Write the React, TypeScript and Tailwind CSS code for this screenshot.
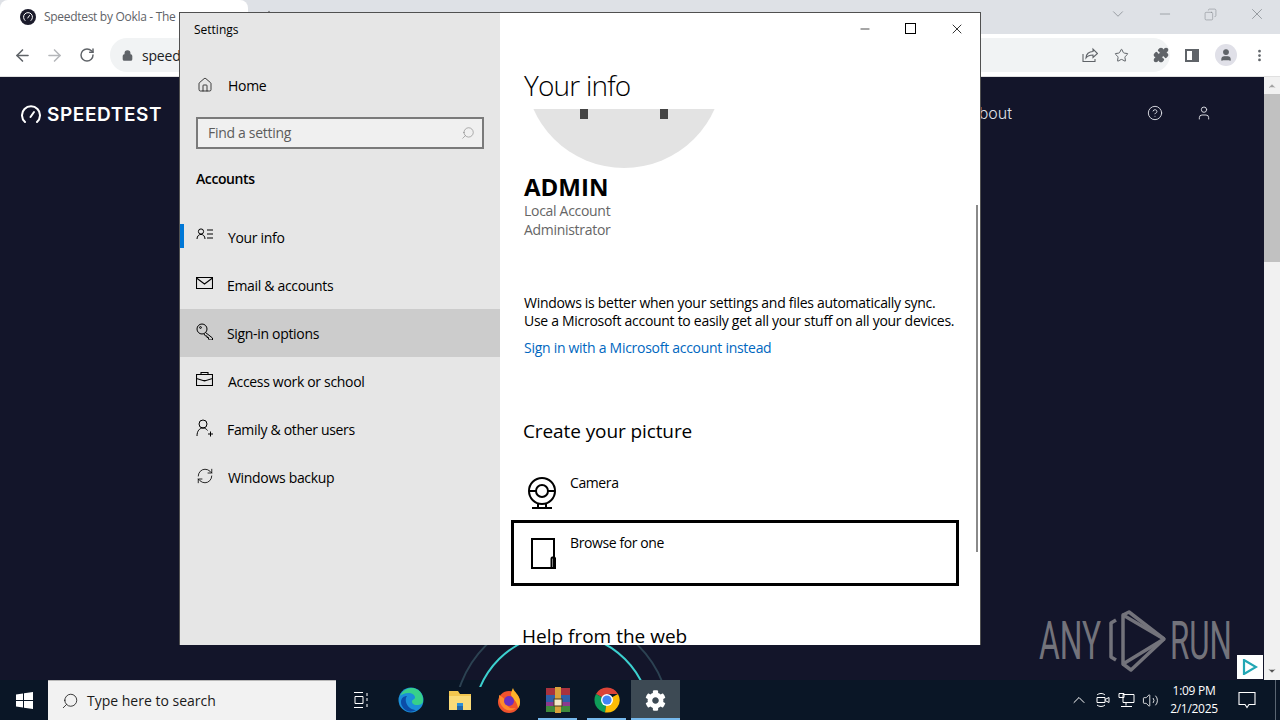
import { ArrowLeft, ArrowRight, RotateCw, Lock, Star, Puzzle, MoreVertical, ChevronDown, Minus, X, Copy, CircleHelp, User, Home, Search, RefreshCw, ChevronUp, Volume2, Plus } from "lucide-react";
import { FaCog } from "react-icons/fa";

const segoe = "font-['Open_Sans','Noto_Sans',sans-serif]";

function UserInfoIcon() {
  return (
    <svg width="17" height="17" viewBox="0 0 17 17" fill="none" stroke="currentColor" strokeWidth="1">
      <circle cx="5" cy="4.500" r="2.600" />
      <path d="M1 12c0-3 2-4.600 4-4.600S9 9 9 12M11 3h6M11 7h6M11 11h6" />
    </svg>
  );
}

function MailIcon() {
  return (
    <svg width="17" height="17" viewBox="0 0 17 17" fill="none" stroke="currentColor" strokeWidth="1.100">
      <path d="M.5 2.500h16v11H.5zM.5 3l8 6 8-6" />
    </svg>
  );
}

function KeyIcon() {
  return (
    <svg width="17" height="17" viewBox="0 0 17 17" fill="none" stroke="currentColor" strokeWidth="1">
      <circle cx="6" cy="6" r="5" />
      <circle cx="4.500" cy="4.500" r=".9" />
      <path d="M9.500 9.500 16.500 15v2h-3l-1-1v-1.500H11V13H9.500l-1.500-2" />
    </svg>
  );
}

function BriefcaseIcon() {
  return (
    <svg width="17" height="17" viewBox="0 0 17 17" fill="none" stroke="currentColor" strokeWidth="1.100">
      <path d="M.5 3.500h16v11H.5zM5 3.500v-2h7v2M.5 7.500l8 2.500 8-2.500M7 9.500h3" />
    </svg>
  );
}

function FamilyIcon() {
  return (
    <svg width="17" height="18" viewBox="0 0 17 18" fill="none" stroke="currentColor" strokeWidth="1">
      <circle cx="7" cy="5" r="4" />
      <path d="M1 17c0-5 2.500-8 6-8 2 0 3.500 1 4.500 2.500M12 15h5M14.500 12.500v5" />
    </svg>
  );
}

const NavItems = [
  { label: "Your info", icon: <UserInfoIcon />, selected: false, active: true, labelClass: "ml-[1px]" },
  { label: "Email & accounts", icon: <MailIcon />, selected: false, active: false, labelClass: "" },
  { label: "Sign-in options", icon: <KeyIcon />, selected: true, active: false, labelClass: "" },
  { label: "Access work or school", icon: <BriefcaseIcon />, selected: false, active: false, labelClass: "ml-[1px]" },
  { label: "Family & other users", icon: <FamilyIcon />, selected: false, active: false, labelClass: "" },
  { label: "Windows backup", icon: <RefreshCw size={18} strokeWidth={1.1} />, selected: false, active: false, labelClass: "" },
];

function Speedometer({ className }: { className?: string }) {
  return (
    <svg className={className} viewBox="0 0 20 20" fill="none" stroke="currentColor" strokeWidth="2" strokeLinecap="round">
      <path d="M4 17a9 9 0 1 1 12 0" />
      <path d="M9.500 12l3.500-5" />
    </svg>
  );
}

function WindowsLogo() {
  return (
    <svg width="17" height="17" viewBox="0 0 17 17" fill="white">
      <path d="M0 2.400 7 1.400V8H0zM8 1.200 17 0v8H8zM0 9h7v6.600l-7-1zM8 9h9v8l-9-1.200z" />
    </svg>
  );
}

function EdgeIcon() {
  return (
    <svg width="26" height="26" viewBox="0 0 26 26">
      <circle cx="13" cy="13" r="12.500" fill="#1b8fd8" />
      <path d="M2 9C5 2 12 0 17 1.500 23 3.500 25.500 9 25 14c0 3-3 4-6 4-4 0-5-2-5-3.500 0-2 3-2 3-4C17 8 14 6 10.500 6 6 6 3 8 2 9z" fill="#37d08a" />
      <path d="M3 15c0-4 3-6 6-6-2 2-2 8 3 12 2 1.500 5 2 6 2-2 1.500-5 2-7 1.600C6 23 3 19 3 15z" fill="#0b4da8" />
    </svg>
  );
}

function FolderIcon() {
  return (
    <svg width="24" height="24" viewBox="0 0 24 24">
      <path d="M1 3h9l2 3h11v15H1z" fill="#f3c64f" />
      <path d="M1 8h22v14H1z" fill="#fbdb78" />
      <path d="M9 15h6v3H9z" fill="#2e8fd8" />
      <path d="M9 18h6v4H9z" fill="#2467a8" />
    </svg>
  );
}

function FirefoxIcon() {
  return (
    <svg width="24" height="26" viewBox="0 0 24 26">
      <circle cx="12" cy="15" r="11" fill="#f0522d" />
      <path d="M16 1c1 4 7 7 7 14 0 3-1 5-2 6-1-7-5-9-7-13 0-3 1-5 2-7z" fill="#ffb229" />
      <path d="M2 8c0 5 1 12 8 15 3 1 7 0 9-2-5 1-9-1-9-4 0-2 2-3 4-3-1-2-4-2-6-1-1-2-3-3-6-5z" fill="#ff8a2b" />
      <circle cx="12" cy="14" r="5" fill="#6b2fc0" />
    </svg>
  );
}

function WinrarIcon() {
  return (
    <svg width="24" height="26" viewBox="0 0 24 26">
      <rect x="0" y="1" width="24" height="7" fill="#a8323e" />
      <rect x="0" y="8" width="24" height="7" fill="#2f5fa8" />
      <rect x="0" y="15" width="24" height="4" fill="#8a3a8e" />
      <rect x="0" y="19" width="24" height="6" fill="#3f8a3c" />
      <rect x="9" y="0" width="6" height="26" fill="#d8a23c" />
      <rect x="8" y="12" width="8" height="7" fill="#f4e9c8" stroke="#4a3a1c" />
    </svg>
  );
}

function ChromeIcon() {
  return (
    <svg width="26" height="26" viewBox="0 0 26 26">
      <path d="M13 13 2 7a12.500 12.500 0 0 1 22 0H13z" fill="#db4437" />
      <path d="M13 13 2 7a12.500 12.500 0 0 0 9 18.400z" fill="#0f9d58" />
      <path d="M13 13 24 7a12.500 12.500 0 0 1-13 18.400z" fill="#fbbc05" />
      <circle cx="13" cy="13" r="6" fill="white" />
      <circle cx="13" cy="13" r="4.600" fill="#4285f4" />
    </svg>
  );
}

function RunLogo() {
  return (
    <svg width="58" height="62" viewBox="0 0 58 62" fill="none" stroke="#73737b" strokeWidth="3.500" strokeLinejoin="round">
      <path d="M14 5 55 29 14 54z" />
      <path d="M14 5 20 2 55 29M14 54l8 6 33-31" />
      <path d="M7 10 2 13v34l5 3" />
    </svg>
  );
}

function TaskbarApp({ children, running, active }: { children: React.ReactNode; running?: boolean; active?: boolean }) {
  return (
    <div className={`relative w-[49px] h-10 flex items-center justify-center ${active ? "bg-[#3d4a54]" : ""}`}>
      {children}
      {running && <div className={`absolute bottom-0 h-[2px] bg-[#76b9ed] ${active ? "left-0 right-0" : "left-[5px] right-[5px]"}`} />}
    </div>
  );
}

export default function App() {
  return (
    <div className={`relative w-[1280px] h-[720px] overflow-hidden flex flex-col bg-[#13152a] ${segoe}`}>
      {/* chrome tab strip */}
      <div className="h-[34px] bg-[#dee1e6] flex items-end justify-between shrink-0">
        <div className="flex items-center">
          <div className="w-[248px] h-[34px] bg-white rounded-t-lg flex items-center pl-[20px] gap-[8px]">
            <div className="w-4 h-4 rounded-full bg-[#1c1c2c] flex items-center justify-center text-white">
              <Speedometer className="w-[10px] h-[10px]" />
            </div>
            <span className="text-[12px] text-[#5f6368] tracking-[-0.3px] whitespace-nowrap">Speedtest by Ookla - The</span>
          </div>
          <Plus size={16} strokeWidth={1.5} className="ml-[13px] text-[#444] -mt-[2px]" />
        </div>
        <div className="flex items-center h-[30px] mb-[5px] text-[#80868b]">
          <ChevronDown size={18} strokeWidth={1} className="mr-[30px]" />
          <Minus size={16} strokeWidth={1} className="mr-[31px]" />
          <Copy size={13} strokeWidth={1} className="mr-[31px] -scale-x-100" />
          <X size={18} strokeWidth={1} className="mr-[14px]" />
        </div>
      </div>

      {/* chrome toolbar */}
      <div className="h-[43px] bg-white flex items-center shrink-0 border-b border-[#e0e0e0] text-[#5f6368]">
        <ArrowLeft size={19} strokeWidth={2} className="ml-[13px]" />
        <ArrowRight size={19} strokeWidth={2} className="ml-[13px] text-[#b5b7ba]" />
        <RotateCw size={16} strokeWidth={2.2} className="ml-[15px]" />
        <div className="ml-[15px] w-[1060px] h-[34px] shrink-0 rounded-full bg-[#f1f3f4] flex items-center pl-[12px]">
          <Lock size={11} strokeWidth={3} fill="#5f6368" />
          <span className="ml-[9px] text-[14px] tracking-[-0.2px] text-[#202124] flex-1">speed</span>
        </div>
      </div>
      <div className="absolute top-[34px] right-0 h-[42px] w-[280px] flex items-center justify-end pr-[13px] text-[#5f6368] pointer-events-none">
        <svg className="mr-[16px]" width="16" height="16" viewBox="0 0 16 16" fill="none" stroke="currentColor" strokeWidth="1.100">
          <path d="M1 7v7.500h12V12M4 11c0-4 3-6.500 7-6.500V2l4.500 4.500L11 10.500V8c-3 0-5.500 1-7 3z" />
        </svg>
        <Star size={15} strokeWidth={1.6} className="mr-[24px]" />
        <Puzzle size={16} fill="#5f6368" className="mr-[16px]" />
        <div className="w-[14px] h-[13px] border-2 border-[#5f6368] mr-[16px] flex justify-end"><div className="w-[5px] bg-[#5f6368]" /></div>
        <div className="w-[22px] h-[22px] rounded-full bg-[#e0e0e8] flex items-center justify-center mr-[15px]"><User size={14} fill="#5f6368" /></div>
        <MoreVertical size={15} strokeWidth={2.4} />
      </div>

      {/* speedtest page */}
      <div className="flex-1 flex min-h-0 relative">
        <div className="flex-1 relative bg-[#13152a]">
          <div className="h-[76px] flex items-center justify-between text-white">
            <div className="flex items-center pl-[21px] gap-[6px]">
              <Speedometer className="w-[20px] h-[20px]" />
              <span className="text-[19px] font-semibold tracking-[0.6px] font-['Inter',sans-serif]">SPEEDTEST</span>
            </div>
            <div className="flex items-center pr-[52px] mb-[4px] text-[#dfe0e6]">
              <span className="text-[16px] mr-[135px] font-['Inter',sans-serif] font-light">About</span>
              <CircleHelp size={16} strokeWidth={1.4} className="mr-[33px]" />
              <User size={16} strokeWidth={1.4} />
            </div>
          </div>
          <svg className="absolute left-[440px] top-[560px]" width="240" height="50" viewBox="0 0 240 50" fill="none">
            <circle cx="122" cy="85" r="108" stroke="#2c4252" strokeWidth="2" />
            <circle cx="122" cy="85" r="89" stroke="#3cd0cf" strokeWidth="2" />
          </svg>
          <div className="absolute left-[1039px] top-[533px] flex items-center text-[#73737b]">
            <span className="text-[53px] font-['Roboto',sans-serif] scale-x-[0.6] origin-left w-[70px] leading-none">ANY</span>
            <RunLogo />
            <span className="text-[53px] font-['Roboto',sans-serif] scale-x-[0.59] origin-left ml-[3px] w-[62px] leading-none">RUN</span>
          </div>
          <div className="absolute right-[1px] bottom-[1px] w-[26px] h-[24px] bg-white flex items-center justify-center">
            <svg width="16" height="16" viewBox="0 0 16 16" fill="none" stroke="#22a7b5" strokeWidth="2.200"><path d="M2 1v14l12-7z" /></svg>
          </div>
        </div>
        <div className="w-[16px] bg-[#f1f1f1] flex flex-col items-center shrink-0">
          <ChevronUp size={10} fill="#a0a0a0" stroke="#a0a0a0" className="mt-[4px]" />
          <div className="w-full h-[168px] bg-[#c1c1c1] mt-[3px]" />
          <div className="flex-1" />
          <ChevronDown size={10} fill="#505050" stroke="#505050" className="mb-[4px]" />
        </div>
      </div>

      {/* windows taskbar */}
      <div className="h-10 bg-[#0a1626] flex items-center shrink-0 text-white">
        <div className="w-[48px] flex items-center justify-center"><WindowsLogo /></div>
        <div className="w-[288px] h-10 bg-[#f2f2f2] border-t border-[#b8b8b8] flex items-center pl-[13px] gap-[8px] text-[#1a1a1a]">
          <Search size={18} strokeWidth={1.1} className="-scale-x-100" />
          <span className="text-[14px]">Type here to search</span>
        </div>
        <div className="w-[49px] ml-0 flex justify-center">
          <svg width="16" height="16" viewBox="0 0 16 16" fill="none" stroke="white"><path d="M1 .5h9M1 15.500h9M2 4.500h8v7H2zM14 1v3M14 6v3M14 12v3" /></svg>
        </div>
        <div className="flex ml-[1px]">
          <TaskbarApp><EdgeIcon /></TaskbarApp>
          <TaskbarApp><FolderIcon /></TaskbarApp>
          <TaskbarApp><FirefoxIcon /></TaskbarApp>
          <TaskbarApp running><WinrarIcon /></TaskbarApp>
          <TaskbarApp running><ChromeIcon /></TaskbarApp>
          <TaskbarApp running active><FaCog size={21} /></TaskbarApp>
        </div>
        <div className="flex-1" />
        <div className="flex items-center">
          <ChevronUp size={20} strokeWidth={1.2} className="mr-[6px]" />
          <svg className="mr-[7px]" width="16" height="16" viewBox="0 0 16 16" fill="none" stroke="white"><path d="M2 3c2-2 6-2 8 0M2 13c2 2 6 2 8 0M2 5.500h8v5H2zM10 7.500l4-2v5l-4-2" /></svg>
          <svg className="mr-[7px]" width="17" height="16" viewBox="0 0 17 16" fill="none" stroke="white"><path d="M5 2.500h11v8H5zM1 1.500h5v4H1zM8 10.500v3M3 14.500h11" /></svg>
          <Volume2 size={17} strokeWidth={1.2} className="mr-[4px]" />
          <div className="w-[62px] text-center text-[12px] leading-[18px] tracking-[-0.3px] text-white">
            <div>1:09 PM</div>
            <div>2/1/2025</div>
          </div>
          <svg className="ml-[13px]" width="18" height="18" viewBox="0 0 18 18" fill="none" stroke="white" strokeWidth="1.100">
            <path d="M1 1.500h16v12h-6l-2 3-2-3H1z" />
          </svg>
          <div className="w-px h-10 bg-[#5a6572] ml-[19px] mr-[4px]" />
        </div>
      </div>

      {/* settings window */}
      <div className="absolute left-[179px] top-[12px] w-[802px] h-[633px] bg-white border-t border-l border-r border-[#505050] flex text-black overflow-hidden">
        <div className="w-[320px] bg-[#e6e6e6] flex flex-col shrink-0">
          <div className="h-[34px] flex items-center pl-[14px] text-[12px]">Settings</div>
          <div className="h-[48px] mt-[14px] flex items-center pl-[17px] gap-[15px] text-[14px] tracking-[-0.3px]">
            <Home size={16} strokeWidth={1.1} />
            <span>Home</span>
          </div>
          <div className="mx-[16px] mt-[8px] h-[32px] pb-[1px] border-2 border-[#7a7a7a] bg-[#f0f0f0] flex items-center justify-between pl-[10px] pr-[7px] text-[#5c5c5c] text-[14px] tracking-[-0.3px] shrink-0">
            <span>Find a setting</span>
            <Search size={14} strokeWidth={1} className="-scale-x-100 text-[#7a7a7a]" />
          </div>
          <div className="pl-[16px] mt-[19px] text-[14px] font-semibold leading-[22px] tracking-[-0.4px]">Accounts</div>
          <div className="mt-[23px] flex flex-col">
            {NavItems.map((item, indx) => (
              <div key={indx} className={`relative h-12 flex items-center pl-[16px] gap-[14px] text-[14px] tracking-[-0.32px] ${item.selected ? "bg-[#cccccc]" : ""}`}>
                {item.active && <div className="absolute left-0 top-[11px] w-[4px] h-6 bg-[#0078d7]" />}
                <span className="mb-[3px]">{item.icon}</span>
                <span className={item.labelClass}>{item.label}</span>
              </div>
            ))}
          </div>
        </div>

        <div className="flex-1 relative flex flex-col">
          <div className="h-[31px] flex items-center justify-end shrink-0">
            <Minus size={14} strokeWidth={1.2} className="mr-[33px]" />
            <div className="w-[11px] h-[11px] border border-black mr-[33px]" />
            <X size={16} strokeWidth={1.2} className="mr-[15px]" />
          </div>
          <div className="pl-[24px] h-[65px] pt-[22px] shrink-0">
            <span className="block text-[28px] font-light leading-[38px] tracking-[-0.8px]">Your info</span>
          </div>
          <div className="h-[60px] overflow-hidden relative shrink-0">
            <div className="w-[198px] h-[198px] rounded-full bg-[#e3e3e3] ml-[25px] mt-[-139px]" />
            <div className="absolute left-[80px] top-0 w-[8px] h-[10px] bg-[#444]" />
            <div className="absolute left-[160px] top-0 w-[8px] h-[10px] bg-[#444]" />
          </div>
          <div className="pl-[24px] mt-[2px] text-[24px] font-bold leading-[32px]">ADMIN</div>
          <div className="pl-[24px] text-[14px] leading-[19px] tracking-[-0.3px] text-[#666] mt-[-2px]">Local Account</div>
          <div className="pl-[24px] text-[14px] leading-[19px] tracking-[-0.3px] text-[#666]">Administrator</div>
          <div className="pl-[24px] mt-[55px] text-[14px] leading-[18px] tracking-[-0.29px] whitespace-nowrap">
            <div>Windows is better when your settings and files automatically sync.</div>
            <div>Use a Microsoft account to easily get all your stuff on all your devices.</div>
          </div>
          <div className="pl-[24px] mt-[8px] text-[14px] leading-[20px] tracking-[-0.28px] text-[#0067c0]">Sign in with a Microsoft account instead</div>
          <div className="pl-[23px] mt-[59px] text-[19px] leading-[28px] tracking-[-0.1px]">Create your picture</div>
          <div className="h-[45px] mt-[30px] flex items-start pl-[27px] gap-[13px] shrink-0">
            <svg className="mt-[2px]" width="30" height="32" viewBox="0 0 30 32" fill="none" stroke="black" strokeWidth="2">
              <circle cx="15" cy="14" r="13" />
              <circle cx="15" cy="14" r="6" />
              <path d="M2 14h7M21 14h7M11 27v4M19 27v4M5 31h20" />
            </svg>
            <span className="text-[14px] leading-[20px] tracking-[-0.4px] mt-[-2px]">Camera</span>
          </div>
          <div className="ml-[11px] mr-[21px] h-[66px] border-[3px] border-black flex items-start pl-[16px] gap-[14px] shrink-0">
            <svg className="mt-[15px]" width="26" height="32" viewBox="0 0 26 32" fill="none" stroke="black" strokeWidth="2">
              <path d="M2 1h22v29H2zM21.500 30v-9a1.800 1.800 0 0 1 3.600 0v9z" />
            </svg>
            <span className="text-[14px] leading-[20px] tracking-[-0.4px] mt-[10px]">Browse for one</span>
          </div>
          <div className="pl-[22px] mt-[36px] text-[19px] leading-[28px] whitespace-nowrap">Help from the web</div>
          <div className="absolute right-[2px] top-[192px] w-[2px] h-[347px] bg-[#8a8a8a]" />
        </div>
      </div>
    </div>
  );
}
